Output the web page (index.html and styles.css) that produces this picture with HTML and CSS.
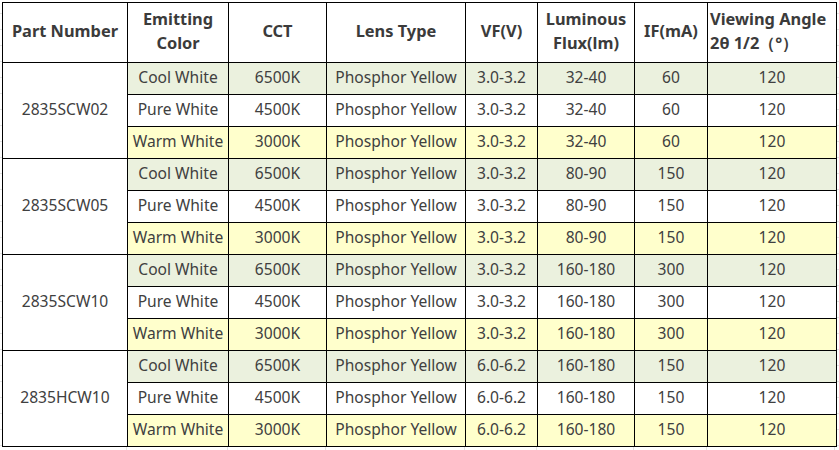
FILE: index.html
```html
<!DOCTYPE html>
<html>
<head>
<meta charset="utf-8">
<link rel="stylesheet" href="styles.css">
</head>
<body>
<div class="sheet">
<table class="spec">
<colgroup>
<col class="c-part"><col class="c-color"><col class="c-cct"><col class="c-lens"><col class="c-vf"><col class="c-flux"><col class="c-if"><col class="c-angle">
</colgroup>
<thead>
<tr class="head">
<th>Part Number</th>
<th>Emitting<br>Color</th>
<th>CCT</th>
<th>Lens Type</th>
<th>VF(V)</th>
<th>Luminous<br>Flux(lm)</th>
<th>IF(mA)</th>
<th class="left">Viewing Angle<br>2θ 1/2（°）</th>
</tr>
</thead>
<tbody>
<tr class="cool"><td rowspan="3" class="part">2835SCW02</td><td>Cool White</td><td>6500K</td><td>Phosphor Yellow</td><td>3.0-3.2</td><td>32-40</td><td>60</td><td>120</td></tr>
<tr class="pure"><td>Pure White</td><td>4500K</td><td>Phosphor Yellow</td><td>3.0-3.2</td><td>32-40</td><td>60</td><td>120</td></tr>
<tr class="warm"><td>Warm White</td><td>3000K</td><td>Phosphor Yellow</td><td>3.0-3.2</td><td>32-40</td><td>60</td><td>120</td></tr>

<tr class="cool"><td rowspan="3" class="part">2835SCW05</td><td>Cool White</td><td>6500K</td><td>Phosphor Yellow</td><td>3.0-3.2</td><td>80-90</td><td>150</td><td>120</td></tr>
<tr class="pure"><td>Pure White</td><td>4500K</td><td>Phosphor Yellow</td><td>3.0-3.2</td><td>80-90</td><td>150</td><td>120</td></tr>
<tr class="warm"><td>Warm White</td><td>3000K</td><td>Phosphor Yellow</td><td>3.0-3.2</td><td>80-90</td><td>150</td><td>120</td></tr>

<tr class="cool"><td rowspan="3" class="part">2835SCW10</td><td>Cool White</td><td>6500K</td><td>Phosphor Yellow</td><td>3.0-3.2</td><td>160-180</td><td>300</td><td>120</td></tr>
<tr class="pure"><td>Pure White</td><td>4500K</td><td>Phosphor Yellow</td><td>3.0-3.2</td><td>160-180</td><td>300</td><td>120</td></tr>
<tr class="warm"><td>Warm White</td><td>3000K</td><td>Phosphor Yellow</td><td>3.0-3.2</td><td>160-180</td><td>300</td><td>120</td></tr>

<tr class="cool"><td rowspan="3" class="part">2835HCW10</td><td>Cool White</td><td>6500K</td><td>Phosphor Yellow</td><td>6.0-6.2</td><td>160-180</td><td>150</td><td>120</td></tr>
<tr class="pure"><td>Pure White</td><td>4500K</td><td>Phosphor Yellow</td><td>6.0-6.2</td><td>160-180</td><td>150</td><td>120</td></tr>
<tr class="warm"><td>Warm White</td><td>3000K</td><td>Phosphor Yellow</td><td>6.0-6.2</td><td>160-180</td><td>150</td><td>120</td></tr>
</tbody>
</table>
<div class="grid-tail">
<span class="g-part"></span><span class="g-color"></span><span class="g-cct"></span><span class="g-lens"></span><span class="g-vf"></span><span class="g-flux"></span><span class="g-if"></span><span class="g-angle"></span>
</div>
</div>
</body>
</html>
```

FILE: styles.css
```css
html, body {
  margin: 0;
  padding: 0;
  background: #ffffff;
}

body {
  font-family: "Noto Sans", "Open Sans", "DejaVu Sans", sans-serif;
  color: #404040;
  width: 839px;
  height: 450px;
  overflow: hidden;
  background-image: repeating-linear-gradient(to bottom, transparent 0, transparent 13px, #e3e3e3 13px, #e3e3e3 14px, transparent 14px, transparent 16px);
}

.sheet {
  padding: 2px 0 0 2px;
  width: 834px;
}

.spec {
  border-collapse: collapse;
  table-layout: fixed;
  width: 834px;
  font-size: 15.6px;
  background: #ffffff;
}

.c-part { width: 125px; }
.c-color { width: 101px; }
.c-cct { width: 98px; }
.c-lens { width: 139px; }
.c-vf { width: 72px; }
.c-flux { width: 97px; }
.c-if { width: 73px; }
.c-angle { width: 129px; }

.spec th,
.spec td {
  border: 1px solid #000000;
  text-align: center;
  vertical-align: middle;
  padding: 0;
  white-space: nowrap;
}

.head th {
  height: 55px;
  padding-bottom: 4px;
  font-size: 16.4px;
  font-weight: bold;
  line-height: 24px;
  color: #3b3b3b;
}

.head th.left {
  text-align: left;
  padding-left: 2px;
}

.spec td {
  height: 28px;
  padding-bottom: 3px;
  line-height: 20px;
}

.spec td.part {
  background: #ffffff;
}

.cool td { background: #ebf1de; }
.pure td { background: #ffffff; }
.warm td { background: #ffffcc; }

.grid-tail {
  display: flex;
  height: 6px;
  background: #ffffff;
}

.grid-tail span {
  flex: none;
  border-right: 1px solid #e3e3e3;
}

.g-part { width: 124px; }
.g-color { width: 100px; }
.g-cct { width: 97px; }
.g-lens { width: 138px; }
.g-vf { width: 71px; }
.g-flux { width: 96px; }
.g-if { width: 72px; }
.g-angle { width: 127px; }
```
